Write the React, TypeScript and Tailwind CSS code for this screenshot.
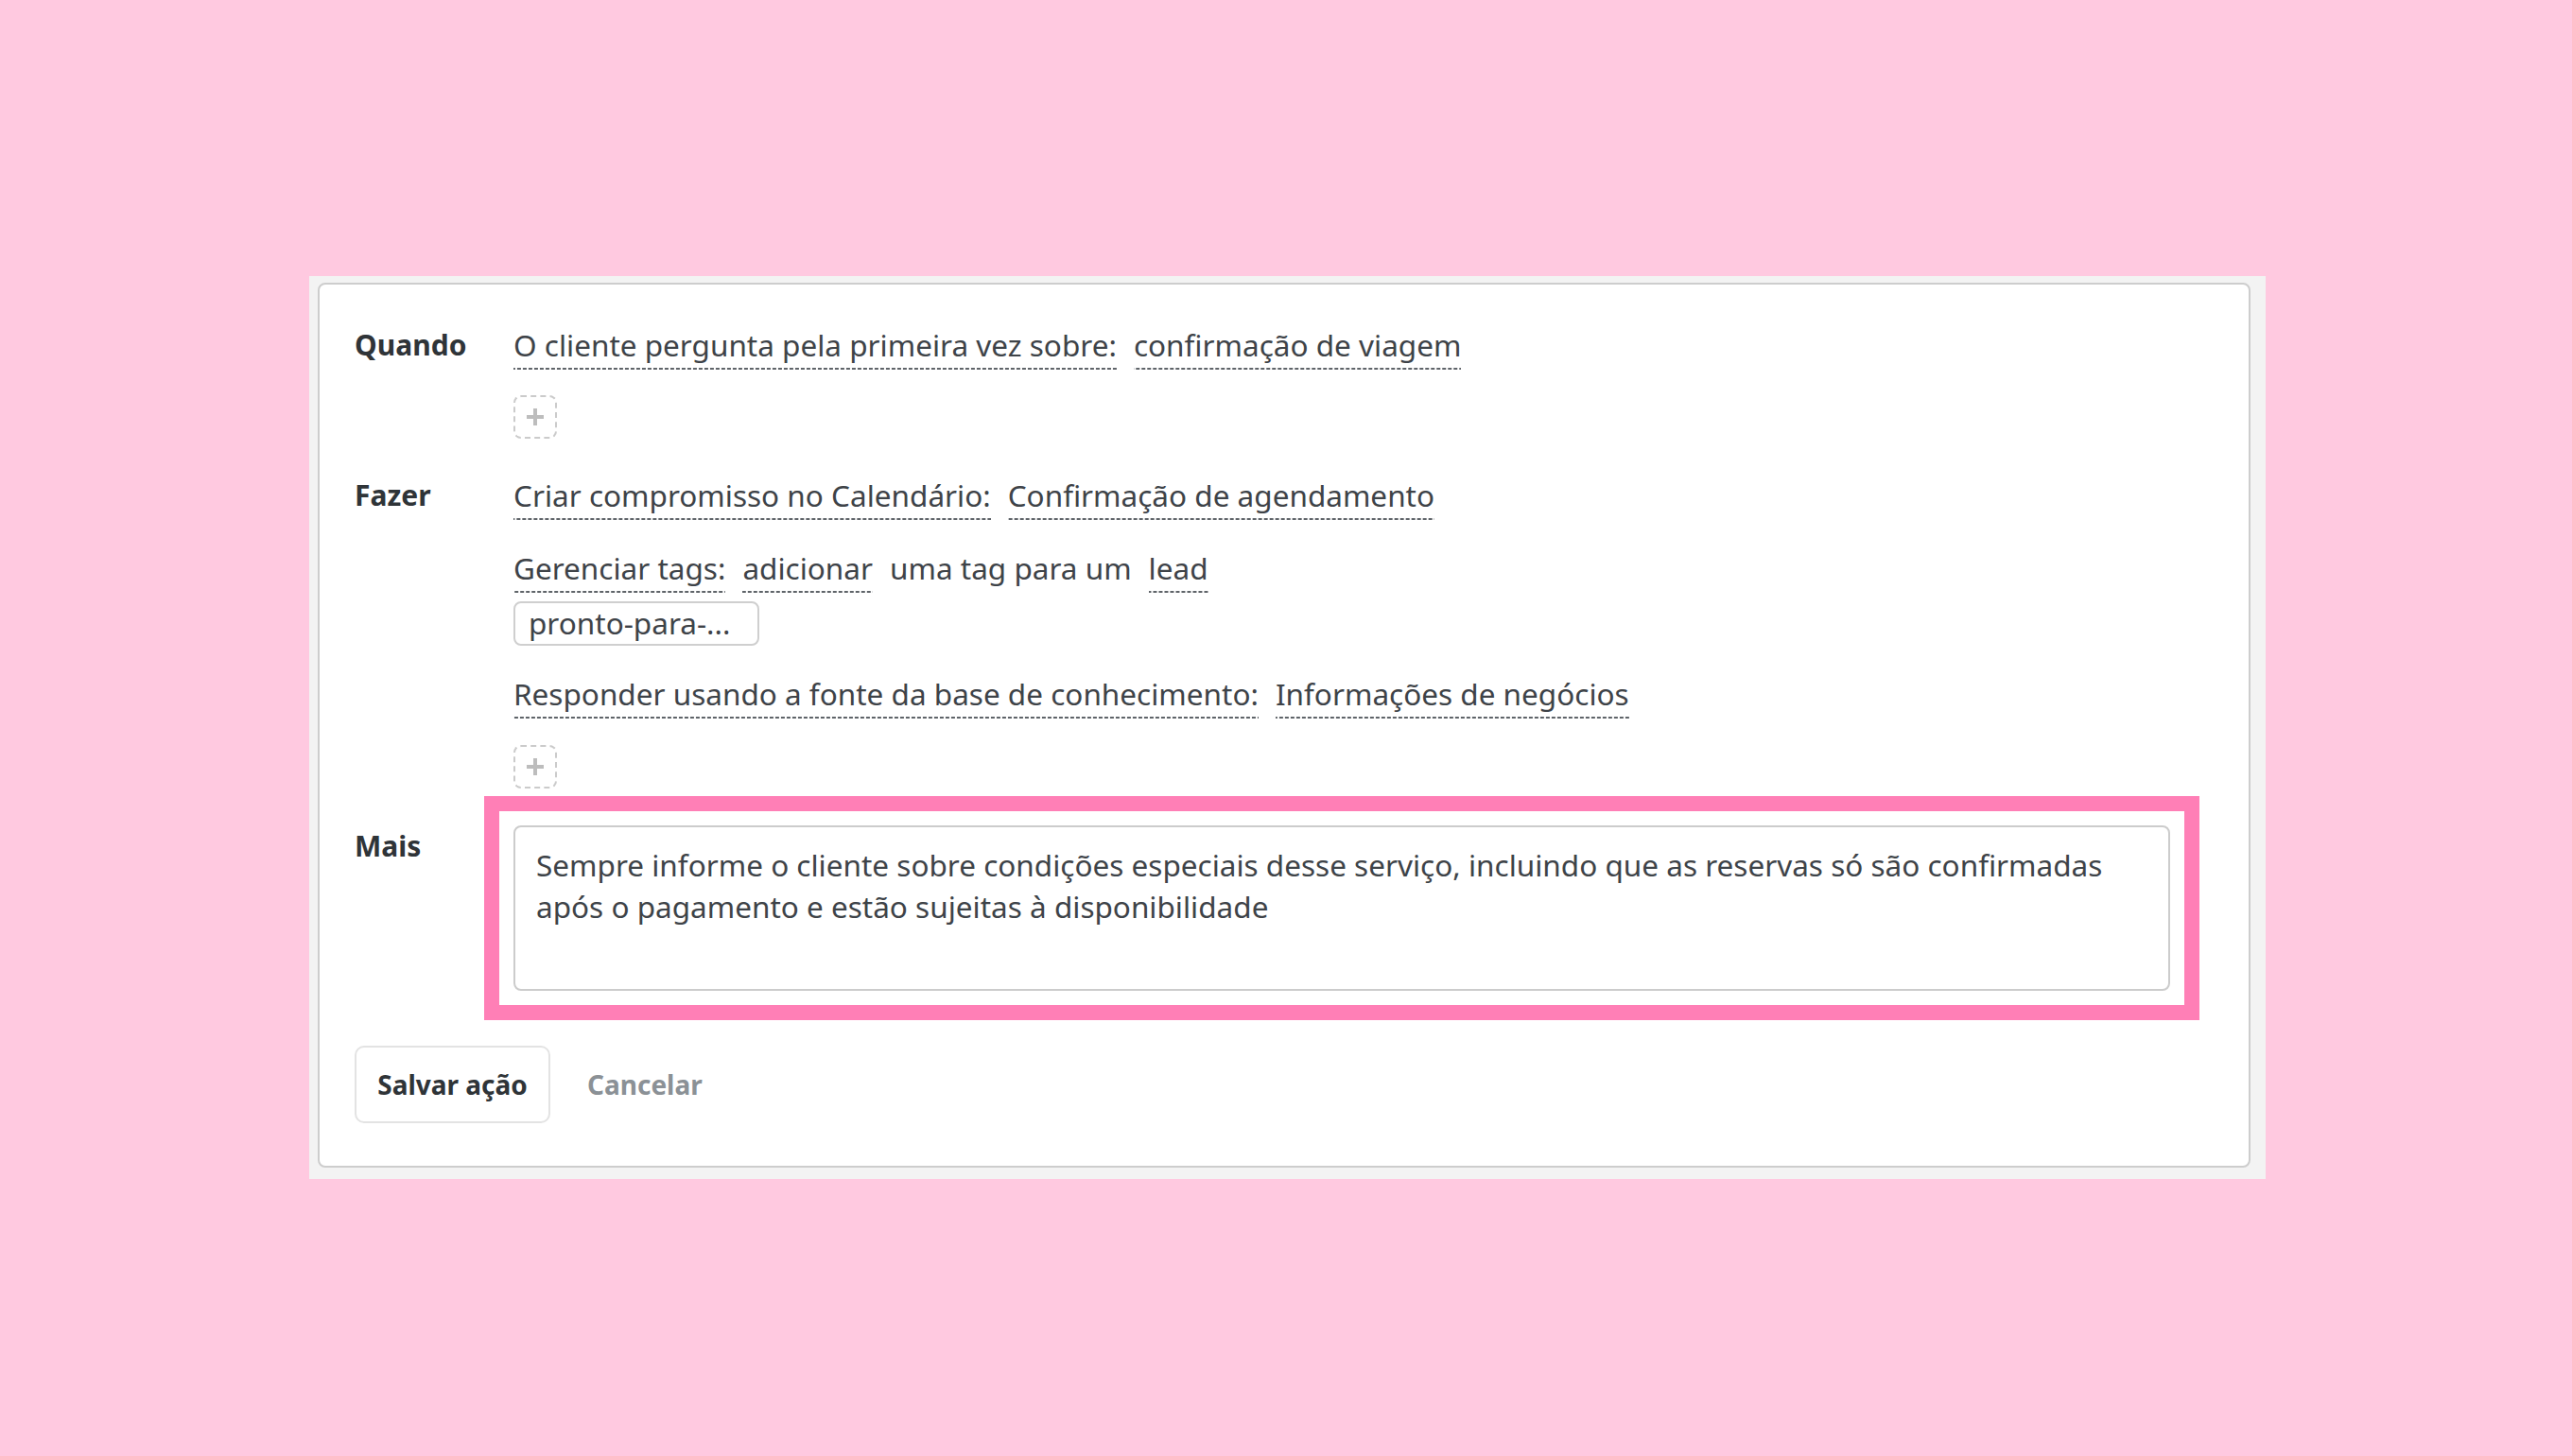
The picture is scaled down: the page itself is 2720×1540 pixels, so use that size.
import React from "react";

const dash =
  "inline-block pb-[8px] bg-[linear-gradient(to_right,#5f6469_4px,transparent_4px)] bg-[length:6px_2px] bg-bottom bg-repeat-x";

function Dashed({ children }: { children: React.ReactNode }) {
  return <span className={dash}>{children}</span>;
}

function PlusBox() {
  return (
    <div className="flex h-[46px] w-[46px] items-center justify-center rounded-[8px] border-2 border-dashed border-[#cbcbcb]">
      <svg width="20" height="20" viewBox="0 0 20 20">
        <path d="M10 1v18M1 10h18" stroke="#bdbdbd" strokeWidth="4" />
      </svg>
    </div>
  );
}

function Label({ children, className = "" }: { children: React.ReactNode; className?: string }) {
  return <div className={`text-[30px] font-bold text-[#2f3438] ${className}`}>{children}</div>;
}

export default function App() {
  return (
    <div
      className="h-[1540px] w-[2720px] bg-[#ffc9e0] pl-[327px] pt-[292px] text-[31.5px] leading-[36px] text-[#3e4348]"
      style={{ fontFamily: "'Noto Sans', Lato, sans-serif" }}
    >
      <div className="w-[2069px] bg-[#f3f3f3] pb-[12px] pl-[9px] pr-[16px] pt-[7px]">
        <div className="rounded-[8px] border-2 border-[#cdcdcd] bg-white pb-[45px] pl-[37px] pt-[46px]">
          <div className="grid grid-cols-[168px_1fr]">
            {/* Quando */}
            <Label>Quando</Label>
            <div>
              <div className="flex flex-wrap items-start gap-x-[18px]">
                <Dashed>O cliente pergunta pela primeira vez sobre:</Dashed>
                <Dashed>confirmação de viagem</Dashed>
              </div>
              <div className="mt-[27px]">
                <PlusBox />
              </div>
            </div>

            {/* Fazer */}
            <Label className="mt-[42px]">Fazer</Label>
            <div className="mt-[42px]">
              <div className="flex flex-wrap items-start gap-x-[18px]">
                <Dashed>Criar compromisso no Calendário:</Dashed>
                <Dashed>Confirmação de agendamento</Dashed>
              </div>
              <div className="mt-[33px] flex flex-wrap items-start gap-x-[18px]">
                <Dashed>Gerenciar tags:</Dashed>
                <Dashed>adicionar</Dashed>
                <span>uma tag para um</span>
                <Dashed>lead</Dashed>
              </div>
              <div className="mt-[9px] h-[47px] w-[260px] rounded-[8px] border-2 border-[#cfcfcf] pl-[14px] pt-[3px]">
                pronto-para-...
              </div>
              <div className="mt-[33px] flex flex-wrap items-start gap-x-[18px]">
                <Dashed>Responder usando a fonte da base de conhecimento:</Dashed>
                <Dashed>Informações de negócios</Dashed>
              </div>
              <div className="mt-[28px]">
                <PlusBox />
              </div>
            </div>

            {/* Mais */}
            <Label className="mt-[43px]">Mais</Label>
            <div className="mt-[39px]">
              <div className="w-[1752px] outline-solid outline-[length:16px] outline-offset-[15px] outline-[#ff7fb6]">
                <div className="h-[175px] rounded-[8px] border-2 border-[#cccccc] pl-[22px] pr-[20px] pt-[18px] leading-[44px]">
                  Sempre informe o cliente sobre condições especiais desse serviço, incluindo que as reservas só são confirmadas
                  <br />
                  após o pagamento e estão sujeitas à disponibilidade
                </div>
              </div>
            </div>
          </div>

          <div className="mt-[58px] flex items-center text-[28px]">
            <button className="h-[82px] w-[207px] rounded-[10px] border-2 border-[#e3e3e3] bg-white font-bold text-[#2f3438]">
              Salvar ação
            </button>
            <button className="ml-[39px] font-bold text-[#8b9196]">Cancelar</button>
          </div>
        </div>
      </div>
    </div>
  );
}
